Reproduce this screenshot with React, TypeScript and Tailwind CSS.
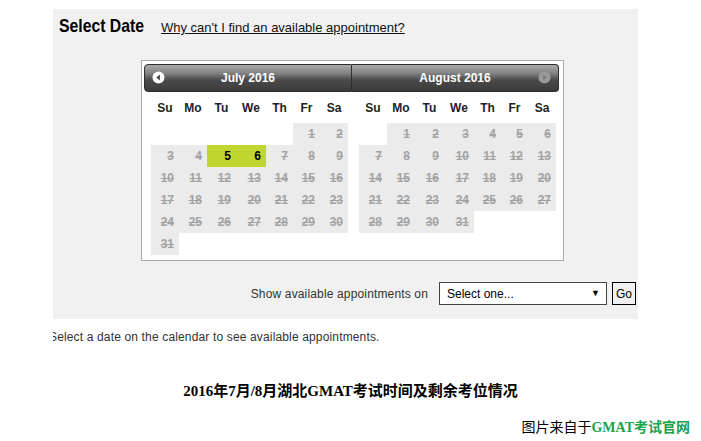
import React from "react";

type Month = {
  title: string;
  offset: number; // empty cells before day 1
  days: number;
  open: number[];
  nav: "prev" | "next";
};

const MONTHS: Month[] = [
  { title: "July 2016", offset: 5, days: 31, open: [5, 6], nav: "prev" },
  { title: "August 2016", offset: 1, days: 31, open: [], nav: "next" },
];

const WEEKDAYS = ["Su", "Mo", "Tu", "We", "Th", "Fr", "Sa"];

const NavIcon = ({ dir }: { dir: "prev" | "next" }) => (
  <svg width="13" height="13" viewBox="0 0 13 13">
    {dir === "prev" ? (
      <>
        <circle cx="6.5" cy="6.5" r="6" fill="#ffffff" />
        <path d="M7.8 3.6 L4.4 6.5 L7.8 9.4 Z" fill="#3a3a3a" />
      </>
    ) : (
      <>
        <circle cx="6.5" cy="6.5" r="6" fill="#9a9a9a" />
        <path d="M5.2 3.6 L8.6 6.5 L5.2 9.4 Z" fill="#7a7a7a" />
      </>
    )}
  </svg>
);

const MonthView = ({ month }: { month: Month }) => {
  const cells: (number | null)[] = [
    ...Array.from({ length: month.offset }, () => null),
    ...Array.from({ length: month.days }, (_, i) => i + 1),
  ];

  return (
    <div className={month.nav === "prev" ? "w-[208px]" : "w-[207px]"}>
      <div
        className={`relative flex h-[28px] items-center justify-center border border-[#2e2e2e] bg-[linear-gradient(to_bottom,#a9a9a9_0%,#858585_30%,#4a4a4a_58%,#3b3b3b_100%)] ${
          month.nav === "prev" ? "rounded-l-[4px]" : "rounded-r-[4px] border-l-0"
        }`}
      >
        {month.nav === "prev" ? (
          <span className="absolute left-[7px] top-[6px] flex">
            <NavIcon dir="prev" />
          </span>
        ) : (
          <span className="absolute right-[7px] top-[6px] flex">
            <NavIcon dir="next" />
          </span>
        )}
        <span className="text-[12px] font-bold text-white">{month.title}</span>
      </div>
      <div className="ml-[7px] grid w-[197px] grid-cols-[28px_28px_29px_30px_27px_27px_28px]">
        {WEEKDAYS.map((d) => (
          <div
            key={d}
            className="flex h-[31px] items-center justify-center text-[12px] font-bold text-[#222]"
          >
            {d}
          </div>
        ))}
        {cells.map((day, i) => {
          if (day === null) return <div key={`e-${i}`} className="h-[22px]" />;
          const isOpen = month.open.includes(day);
          return (
            <div
              key={day}
              className={`flex h-[22px] items-center justify-end pr-[5px] text-[12px] font-bold ${
                isOpen
                  ? "bg-[#bfd62f] text-black"
                  : "bg-[#ebebeb] text-[#a3a3a3] line-through"
              }`}
            >
              {day}
            </div>
          );
        })}
      </div>
    </div>
  );
};

export default function App() {
  return (
    <div className="relative h-[441px] w-[701px] overflow-hidden bg-white pt-[9px] font-['Liberation_Sans',Arial,sans-serif] text-[#333]">
      <div className="ml-[53px] flex h-[310px] w-[585px] flex-col bg-[#f1f1f1]">
        <div className="flex h-[51px] items-baseline pl-[6px] pt-[5px]">
          <h2 className="w-[84px] origin-left scale-x-[0.83] whitespace-nowrap text-[19px] leading-[24px] font-bold text-black">
            Select Date
          </h2>
          <a href="#" className="ml-[18px] text-[13px] text-[#111] underline">
            Why can't I find an available appointment?
          </a>
        </div>

        <div className="ml-[88px] h-[201px] w-[423px] border border-[#aaaaaa] bg-white pl-[2px] pt-[3px]">
          <div className="flex">
            {MONTHS.map((m) => (
              <MonthView key={m.title} month={m} />
            ))}
          </div>
        </div>

        <div className="mt-[21px] flex h-[23px] items-center justify-end pr-[2px]">
          <span className="mr-[11px] text-[12px] tracking-[0.15px] text-[#333]">
            Show available appointments on
          </span>
          <div className="flex h-[23px] w-[168px] items-center justify-between border border-[#444] bg-white pl-[7px] pr-[6px] text-[12px] text-black">
            <span>Select one...</span>
            <span className="text-[9px]">▼</span>
          </div>
          <button className="ml-[5px] h-[23px] w-[24px] border border-black bg-[#f0f0f0] text-[12px] text-black">
            Go
          </button>
        </div>
      </div>

      <div className="ml-[53px] mt-[9px] overflow-hidden">
        <p className="-ml-[4px] text-[12px] leading-[18px] tracking-[0.15px] whitespace-nowrap text-[#333]">
          Select a date on the calendar to see available appointments.
        </p>
      </div>

      <p className="mt-[35px] text-center font-['Liberation_Serif','Noto_Sans_CJK_SC',serif] text-[15px] leading-[20px] font-bold text-black">
        2016年7月/8月湖北GMAT考试时间及剩余考位情况
      </p>

      <p className="mt-[17px] pr-[11px] text-right font-['Liberation_Serif','Noto_Sans_CJK_SC',serif] text-[14px] leading-[20px] text-black">
        图片来自于<span className="font-bold text-[#17a34a]">GMAT考试官网</span>
      </p>
    </div>
  );
}
